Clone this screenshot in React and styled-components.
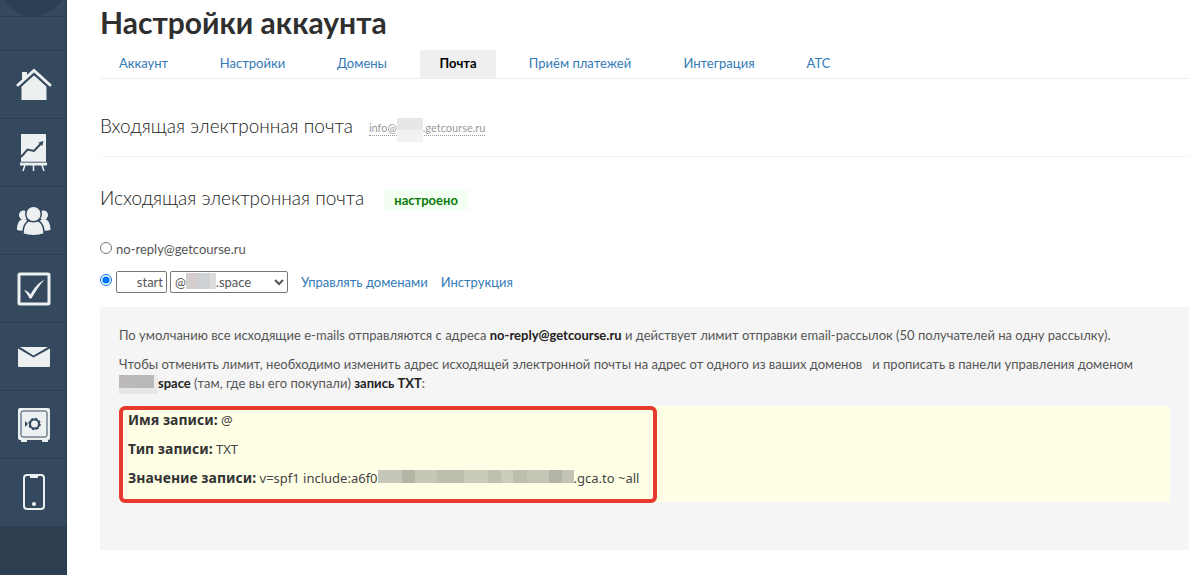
import React, { useState } from 'react';
import styled, { createGlobalStyle, css } from 'styled-components';

const GlobalStyle = createGlobalStyle`
  *, *::before, *::after { box-sizing: border-box; }
  html, body { margin: 0; background: #fff; }
  body {
    font-family: Lato, "Open Sans", sans-serif;
    font-size: 13px;
    line-height: 19px;
    color: #555;
  }
  a { color: #337ab7; text-decoration: none; }
  h1, h2, p { margin: 0; }
`;

const Page = styled.div`
  display: flex;
  min-height: 100vh;
`;

/* ---------- sidebar ---------- */

const Sidebar = styled.nav`
  flex: 0 0 67px;
  min-width: 0;
  background: #2d3e50;
  border-right: 1px solid #263a50;
`;

const AvatarSlot = styled.div`
  display: flex;
  justify-content: center;
  align-items: flex-end;
  height: 16px;
  overflow: hidden;
  background: #34495e;
`;

const Avatar = styled.div`
  flex: none;
  width: 68px;
  height: 68px;
  border-radius: 50%;
  background: #2b3e52;
`;

const Spacer = styled.div`
  height: 34px;
  background: #34495e;
  border-top: 1px solid #2b3f54;
`;

const SideLink = styled.a`
  display: flex;
  align-items: center;
  justify-content: center;
  height: 68px;
  padding-left: 2px;
  background: #34495e;
  border-top: 1px solid #2b3f54;

  svg { display: block; }
`;

/* ---------- content ---------- */

const Main = styled.main`
  flex: 1;
  min-width: 0;
  padding: 2px 11px 24px 33px;
`;

const Title = styled.h1`
  font-size: 30px;
  line-height: 40px;
  font-weight: 700;
  color: #2f2f2f;
`;

const Tabs = styled.nav`
  display: flex;
  gap: 14px;
  margin-top: 8px;
  border-bottom: 1px solid #eee;
`;

const Tab = styled.a`
  flex: 0 0 auto;
  min-width: ${p => p.$min}px;
  padding: 4px 18px 5px;
  text-align: center;
  ${p => p.$active && css`
    background: #efefef;
    color: #000;
    font-weight: 700;
  `}
`;

const SectionHead = styled.header`
  display: flex;
  align-items: center;
  gap: ${p => p.$gap}px;
`;

const Incoming = styled.section`
  padding: 34px 0 17px;
  border-bottom: 1px solid #f4f4f4;
`;

const Outgoing = styled.section`
  padding-top: 28px;
`;

const SectionTitle = styled.h2`
  font-size: 19px;
  line-height: 26px;
  font-weight: 300;
  color: #222;
`;

const Mosaic = styled.span`
  display: inline-block;
  flex: none;
  width: ${p => p.$w}px;
  height: ${p => p.$h}px;
  background: ${p => p.$bg};
  vertical-align: ${p => p.$align || 'middle'};
`;

const Email = styled.a`
  display: inline-flex;
  align-items: center;
  margin-top: 4px;
  height: 16px;
  font-size: 11px;
  line-height: 15px;
  color: #999;
  border-bottom: 1px dotted #999;

  ${Mosaic} { margin-top: 4px; }
`;

const Badge = styled.span`
  padding: 1px 10px 0;
  background: #f2fff2;
  color: #0a7a0a;
  font-weight: 700;
  margin-top: 4px;
`;

const Option = styled.div`
  display: flex;
  align-items: center;
  margin-top: ${p => p.$top}px;
`;

const Radio = styled.input`
  width: 12px;
  height: 12px;
  margin: 0 4px 4px 0;
`;

const Row = styled.div`
  display: flex;
  align-items: center;
  gap: 3px;
`;

const field = css`
  height: 22px;
  border: 1px solid #767676;
  border-radius: 2px;
  background: #fff;
  color: #555;
  font: 13px Lato, "Open Sans", sans-serif;
`;

const NameInput = styled.input`
  ${field}
  width: 51px;
  padding: 0 3px;
  text-align: right;
`;

const SelectWrap = styled.span`
  position: relative;
  display: inline-flex;
`;

const DomainSelect = styled.select`
  ${field}
  width: 118px;
  padding: 0;
`;

const SelectMosaic = styled(Mosaic)`
  position: absolute;
  left: 16px;
  top: 2px;
  pointer-events: none;
`;

const Links = styled.span`
  display: flex;
  gap: 13px;
  margin-left: 13px;
`;

const Panel = styled.div`
  margin-top: 14px;
  padding: 19px 19px 48px;
  background: #f5f5f5;
`;

const Text = styled.p`
  margin-bottom: 10px;

  strong { color: #222; }
`;

const Record = styled.div`
  display: flex;
  margin-top: 12px;
  height: 96px;
  background: #ffffe5;
`;

const Highlight = styled.div`
  flex: 0 0 538px;
  height: 97px;
  padding: 0 5px;
  border: 4px solid #e6392f;
  border-radius: 6px;
  font: 13px/19px "Noto Sans", "Open Sans", sans-serif;
  color: #444;
  white-space: nowrap;

  p + p { margin-top: 9px; }
  strong { color: #333; font-size: 14px; }
`;

/* ---------- sidebar icons ---------- */

const INK = '#ecf0f1';
const BG = '#34495e';

const icons = {
  home: (
    <svg width="36" height="34" viewBox="0 0 36 34" fill="none">
      <path d="M18 7 30.500 18v14h-25V18z" fill={INK} />
      <path d="M2 18.500 18 4l16 14.500" stroke={BG} strokeWidth="5" />
      <path d="M6 13V4h5v5z" fill={INK} />
      <path d="M2 17 18 2.500 34 17" stroke={INK} strokeWidth="3" strokeLinecap="round" />
    </svg>
  ),
  stats: (
    <svg width="30" height="38" viewBox="0 0 30 38" fill="none">
      <path d="M2 0h25v28H2z" fill={INK} />
      <path d="M2 23 8.500 15.500 15 17l6.500-7" stroke={BG} strokeWidth="2" />
      <path d="m24.500 7-1.200 5-4-3.600z" fill={BG} />
      <path d="M1 30h27" stroke={INK} strokeWidth="3" />
      <path d="M2 28h25" stroke={BG} strokeWidth="0.500" />
      <path d="m6 31-2 6M14.500 31v6M23 31l2 6" stroke={INK} strokeWidth="1.500" />
    </svg>
  ),
  users: (
    <svg width="36" height="30" viewBox="0 0 36 30">
      <g fill={INK}>
        <circle cx="7.500" cy="9" r="4.500" />
        <circle cx="27.500" cy="9" r="4.500" />
        <path d="M1 24c0-6 2-11 6.500-11S12 16 12 24c-4 1-8 1-11 0zM34.500 24c0-6-2-11-6.500-11s-5 3-5 11c4 1 8 1 11.500 0z" />
      </g>
      <g fill={INK} stroke={BG} strokeWidth="1.500">
        <path d="M7 28c0-7 2.500-14 10.500-14S28 21 28 28c-6 2.300-15 2.300-21 0z" />
        <circle cx="17.500" cy="8" r="7.800" />
      </g>
    </svg>
  ),
  check: (
    <svg width="34" height="34" viewBox="0 0 34 34" fill="none">
      <rect x="2" y="2" width="30" height="30" rx="1" stroke={INK} strokeWidth="3" />
      <path d="M7 18c3 1 5 2 6.500 4.500C17 16 21 11 27.500 7.500 22 14 18 20 14.500 26.500h-2C11 23 9 20.500 7 18z" fill={INK} />
    </svg>
  ),
  mail: (
    <svg width="34" height="20" viewBox="0 0 34 20" fill="none">
      <path d="M1 1.500 16.500 10.500 33 1.500V19a1 1 0 0 1-1 1H2a1 1 0 0 1-1-1z" fill={INK} />
      <path d="M3 0h28L16.500 8.500z" fill={INK} />
    </svg>
  ),
  safe: (
    <svg width="34" height="34" viewBox="0 0 34 34" fill="none">
      <rect x="1" y="0" width="32" height="32" rx="2" fill={INK} />
      <path d="M4 32h6v2H4zM25 32h6v2h-6z" fill={INK} />
      <rect x="4" y="3" width="26" height="26" rx="2" stroke={BG} strokeWidth="1" />
      <circle cx="17.500" cy="16" r="4.500" stroke={BG} strokeWidth="2" />
      <circle cx="17.500" cy="16" r="5.500" stroke={BG} strokeWidth="1.500" strokeDasharray="2.300 2.020" />
      <path d="m8 13 3 3-3 3z" fill={BG} />
    </svg>
  ),
  phone: (
    <svg width="24" height="37" viewBox="0 0 24 37" fill="none">
      <rect x="2" y="1" width="20" height="34" rx="3" stroke={INK} strokeWidth="2" />
      <path d="M8 1h8v3H8z" fill={INK} />
      <circle cx="12" cy="30" r="2" fill={INK} />
    </svg>
  ),
};

const menu = [
  ['home', 'Главная'],
  ['stats', 'Статистика'],
  ['users', 'Пользователи'],
  ['check', 'Задачи'],
  ['mail', 'Сообщения'],
  ['safe', 'Продажи'],
  ['phone', 'Приложение'],
];

const tabs = [
  ['Аккаунт', 87],
  ['Настройки', 103],
  ['Домены', 88],
  ['Почта', 76],
  ['Приём платежей', 140],
  ['Интеграция', 110],
  ['АТС', 61],
];

export default function App() {
  const [sender, setSender] = useState('custom');

  return (
    <Page>
      <GlobalStyle />
      <Sidebar>
        <AvatarSlot><Avatar /></AvatarSlot>
        <Spacer />
        {menu.map(([id, label]) => (
          <SideLink key={id} href="#" aria-label={label}>{icons[id]}</SideLink>
        ))}
      </Sidebar>

      <Main>
        <Title>Настройки аккаунта</Title>
        <Tabs>
          {tabs.map(([label, min]) => (
            <Tab key={label} href="#" $min={min} $active={label === 'Почта'}>{label}</Tab>
          ))}
        </Tabs>

        <Incoming>
          <SectionHead $gap={16}>
            <SectionTitle>Входящая электронная почта</SectionTitle>
            <Email href="#">
              info@
              <Mosaic $w={26} $h={24} $bg="linear-gradient(#e6e8e8 50%, #f2f2f2 50%)" />
              .getcourse.ru
            </Email>
          </SectionHead>
        </Incoming>

        <Outgoing>
          <SectionHead $gap={20}>
            <SectionTitle>Исходящая электронная почта</SectionTitle>
            <Badge>настроено</Badge>
          </SectionHead>

          <Option $top={29}>
            <Radio type="radio" name="sender" id="sender-default"
              checked={sender === 'default'} onChange={() => setSender('default')} />
            <label htmlFor="sender-default">no-reply@getcourse.ru</label>
          </Option>

          <Option $top={12}>
            <Radio type="radio" name="sender" aria-label="start"
              checked={sender === 'custom'} onChange={() => setSender('custom')} />
            <Row>
              <NameInput type="text" defaultValue="start" aria-label="Имя ящика" />
              <SelectWrap>
                <DomainSelect aria-label="Домен">
                  <option>{'@\u00a0\u00a0\u00a0\u00a0\u00a0\u00a0\u00a0\u00a0\u00a0.space'}</option>
                </DomainSelect>
                <SelectMosaic $w={30} $h={16} $bg="linear-gradient(90deg, #d3cecd 40%, #cdd2d6 40% 80%, #dcdcdc 80%)" />
              </SelectWrap>
            </Row>
            <Links>
              <a href="#">Управлять доменами</a>
              <a href="#">Инструкция</a>
            </Links>
          </Option>

          <Panel>
            <Text>
              По умолчанию все исходящие e-mails отправляются с адреса <strong>no-reply@getcourse.ru</strong> и
              действует лимит отправки email-рассылок (50 получателей на одну рассылку).
            </Text>
            <Text>
              Чтобы отменить лимит, необходимо изменить адрес исходящей электронной почты на адрес от одного из
              ваших доменов &nbsp; и прописать в панели управления доменом{' '}
              <Mosaic $w={39} $h={19} $bg="linear-gradient(90deg, #bdb9ba 30%, #b9b9bb 30% 90%, #ececec 90%) top / 100% 13px no-repeat, #e6e6e6" />
              <strong>space</strong> (там, где вы его покупали) <strong>запись TXT</strong>:
            </Text>
            <Record>
              <Highlight>
                <p><strong>Имя записи:</strong> @</p>
                <p><strong>Тип записи:</strong> TXT</p>
                <p>
                  <strong>Значение записи:</strong> v=spf1 include:a6f0
                  <Mosaic $w={196} $h={13} $align="baseline"
                    $bg="linear-gradient(90deg, #c6c7b8 12%, #b5b5a5 12% 19%, #c6c7b4 19% 30%, #bdbeab 30% 44%, #cbccb8 44% 56%, #bfc0b0 56% 63%, #cbccb9 63% 69%, #bdbeac 69% 76%, #c5c6b5 76% 87%, #b3b4a6 87% 94%, #c3c4b4 94%)" />
                  .gca.to ~all
                </p>
              </Highlight>
            </Record>
          </Panel>
        </Outgoing>
      </Main>
    </Page>
  );
}
